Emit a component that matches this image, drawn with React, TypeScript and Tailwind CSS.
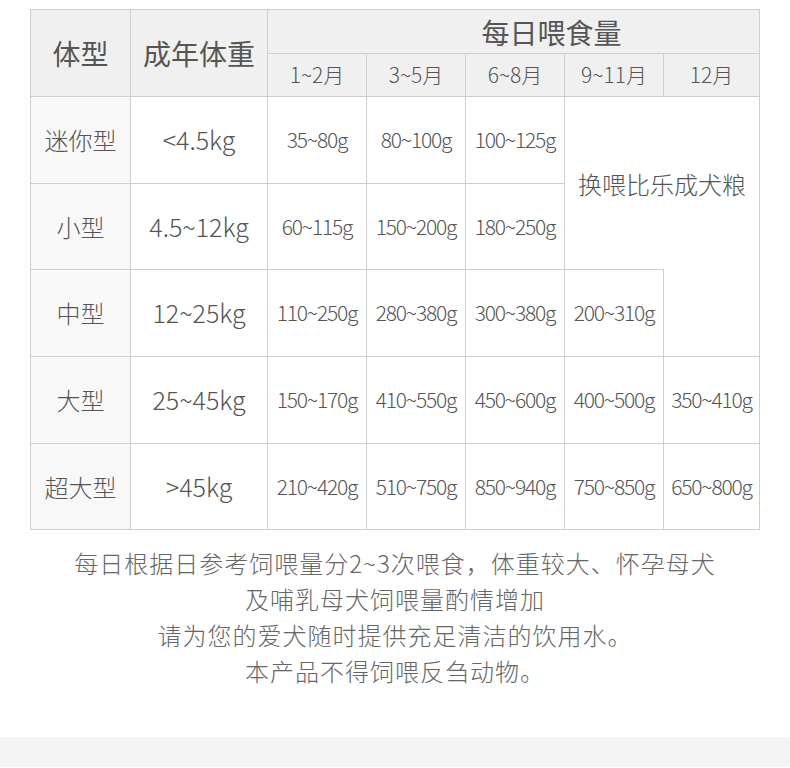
const font = "font-['Noto_Sans_CJK_SC','Noto_Sans',sans-serif]";

const months = ['1~2月', '3~5月', '6~8月', '9~11月', '12月'];

const rows = [
  { type: '迷你型', weight: '<4.5kg', values: ['35~80g', '80~100g', '100~125g'] },
  { type: '小型', weight: '4.5~12kg', values: ['60~115g', '150~200g', '180~250g'] },
  { type: '中型', weight: '12~25kg', values: ['110~250g', '280~380g', '300~380g', '200~310g'] },
  { type: '大型', weight: '25~45kg', values: ['150~170g', '410~550g', '450~600g', '400~500g', '350~410g'] },
  { type: '超大型', weight: '>45kg', values: ['210~420g', '510~750g', '850~940g', '750~850g', '650~800g'] },
];

const cell = 'flex items-center justify-center border-r border-b border-[#cfcfcf]';

export default function App() {
  return (
    <div className={`w-[790px] min-h-[768px] bg-white ${font}`}>
      <div className="pt-[9px] pl-[30px]">
        <div className="grid w-[730px] grid-cols-[100px_137px_99px_99px_99px_99px_96px] grid-rows-[44px_43px_87px_86px_87px_87px_86px] border-t border-l border-[#cfcfcf] font-light text-[#555]">
          <div className={`${cell} row-span-2 bg-[#f0f0f0] text-[28px] font-normal`}>体型</div>
          <div className={`${cell} row-span-2 bg-[#f0f0f0] text-[28px] font-normal`}>成年体重</div>
          <div className={`${cell} col-span-5 bg-[#f0f0f0] pl-[76px] text-[28px] font-normal`}>每日喂食量</div>
          {months.map(m => (
            <div key={m} className={`${cell} bg-[#f0f0f0] text-[21px]`}>
              {m}
            </div>
          ))}

          {rows.map((row, i) => (
            <div key={row.type} className="contents">
              <div className={`${cell} bg-[#f8f8f8] text-[24px]`}>{row.type}</div>
              <div className={`${cell} text-[25px]`}>{row.weight}</div>
              {row.values.map((v, j) => (
                <div
                  key={v + j}
                  className={`${cell} text-[21px] tracking-[-1.2px] ${i === 2 && j === 3 ? '-mt-px border-t' : ''}`}
                >
                  {v}
                </div>
              ))}
              {i === 0 && (
                <div className="col-span-2 row-span-2 flex items-center justify-center border-r border-[#cfcfcf] text-[24px]">
                  换喂比乐成犬粮
                </div>
              )}
              {i === 2 && <div className="border-r border-b border-[#cfcfcf]" />}
            </div>
          ))}
        </div>
      </div>

      <div className="mt-[15px] text-center text-[24px] font-light leading-[36px] tracking-[1px] text-[#666]">
        <p>每日根据日参考饲喂量分2~3次喂食，体重较大、怀孕母犬</p>
        <p>及哺乳母犬饲喂量酌情增加</p>
        <p>请为您的爱犬随时提供充足清洁的饮用水。</p>
        <p>本产品不得饲喂反刍动物。</p>
      </div>

      <div className="mt-[48px] h-[30px] bg-[#f4f4f4]" />
    </div>
  );
}
